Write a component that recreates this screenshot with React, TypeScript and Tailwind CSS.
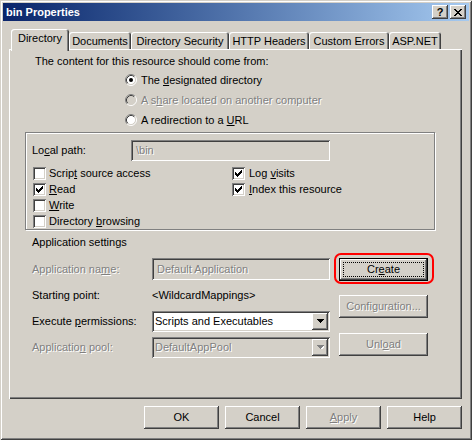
import React from "react";

const raised =
  "shadow-[inset_-1px_-1px_#404040,inset_1px_1px_#ffffff,inset_-2px_-2px_#808080]";
const sunken =
  "shadow-[inset_1px_1px_#808080,inset_-1px_-1px_#ffffff,inset_2px_2px_#404040,inset_-2px_-2px_#d4d0c8]";
const dis = "text-[#808080] [text-shadow:1px_1px_0_#ffffff]";

function Check({ checked }: { checked?: boolean }) {
  return (
    <span className={`w-[13px] h-[13px] bg-white ${sunken} flex items-center justify-center shrink-0`}>
      {checked && (
        <svg width="7" height="7" viewBox="0 0 7 7" shapeRendering="crispEdges">
          <path
            d="M0 2h1v3H0z M1 3h1v3H1z M2 4h1v3H2z M3 3h1v3H3z M4 2h1v3H4z M5 1h1v3H5z M6 0h1v3H6z"
            fill="#000"
          />
        </svg>
      )}
    </span>
  );
}

function Radio({ checked, disabled }: { checked?: boolean; disabled?: boolean }) {
  return (
    <svg width="12" height="12" viewBox="0 0 12 12" className="shrink-0">
      <circle cx="6" cy="6" r="4.5" fill={disabled ? "#d4d0c8" : "#ffffff"} />
      <path d="M2.11 9.89 A5.5 5.5 0 0 1 9.89 2.11" stroke="#808080" fill="none" strokeWidth="1" />
      <path d="M2.82 9.18 A4.5 4.5 0 0 1 9.18 2.82" stroke="#404040" fill="none" strokeWidth="1" />
      <path d="M9.89 2.11 A5.5 5.5 0 0 1 2.11 9.89" stroke="#ffffff" fill="none" strokeWidth="1" />
      <path d="M9.18 2.82 A4.5 4.5 0 0 1 2.82 9.18" stroke="#d4d0c8" fill="none" strokeWidth="1" />
      {checked && <circle cx="6" cy="6" r="2" fill="#000" />}
    </svg>
  );
}

function Arrow({ disabled }: { disabled?: boolean }) {
  return (
    <span className={`w-[16px] h-[17px] m-[2px] bg-[#d4d0c8] ${raised} flex items-center justify-center shrink-0`}>
      <svg width="7" height="4" viewBox="0 0 7 4" shapeRendering="crispEdges">
        {disabled && <path d="M1 1h7v1h-1v1h-1v1h-1v1h-1v-1h-1v-1h-1v-1h-1z" fill="#ffffff" />}
        <path d="M0 0h7v1h-1v1h-1v1h-1v1h-1v-1h-1v-1h-1v-1h-1z" fill={disabled ? "#808080" : "#000"} />
      </svg>
    </span>
  );
}

function Btn({
  children,
  className = "",
}: {
  children: React.ReactNode;
  className?: string;
}) {
  return (
    <div className={`h-[23px] bg-[#d4d0c8] ${raised} flex items-center justify-center ${className}`}>
      {children}
    </div>
  );
}

export default function App() {
  return (
    <div
      className={`w-[472px] h-[440px] bg-[#d4d0c8] p-[3px] flex flex-col font-['Liberation_Sans',Arial,sans-serif] text-[11px] leading-none text-black shadow-[inset_1px_1px_#d4d0c8,inset_-1px_-1px_#404040,inset_2px_2px_#ffffff,inset_-2px_-2px_#808080]`}
    >
      {/* Title bar */}
      <div className="h-[18px] flex items-center bg-linear-to-r from-[#0a246a] to-[#a6caf0] pl-[3px] pr-[3px]">
        <span className="font-bold text-white text-[11px] flex-1">bin Properties</span>
        <div className="flex gap-[2px]">
          <div className={`w-[16px] h-[14px] bg-[#d4d0c8] ${raised} flex items-center justify-center font-bold text-[11px] pt-px`}>
            ?
          </div>
          <div className={`w-[16px] h-[14px] bg-[#d4d0c8] ${raised} flex items-center justify-center`}>
            <svg width="8" height="7" viewBox="0 0 8 7" shapeRendering="crispEdges">
              <path
                d="M0 0h2v1h1v1h2v-1h1v-1h2v1h-1v1h-1v1h-1v1h1v1h1v1h1v1h-2v-1h-1v-1h-2v1h-1v1h-2v-1h1v-1h1v-1h1v-1h-1v-1h-1v-1h-1z"
                fill="#000"
              />
            </svg>
          </div>
        </div>
      </div>

      {/* Tabs */}
      <div className="ml-[6px] mt-[8px] flex flex-col">
        <div className="h-[20px] flex items-end pl-[2px]">
          <div className="relative z-10 w-[58px] h-[22px] -mb-[2px] bg-[#d4d0c8] rounded-t-[3px] shadow-[inset_1px_1px_#ffffff,inset_-1px_0_#404040,inset_-2px_0_#808080] flex items-center justify-center pb-[3px]">
            Directory
          </div>
          {[
            ["Documents", "w-[62px]"],
            ["Directory Security", "w-[98px]"],
            ["HTTP Headers", "w-[80px]"],
            ["Custom Errors", "w-[80px]"],
            ["ASP.NET", "w-[52px]"],
          ].map(([t, w]) => (
            <div
              key={t}
              className={`${w} h-[17px] bg-[#d4d0c8] rounded-t-[3px] shadow-[inset_1px_1px_#ffffff,inset_-1px_0_#404040,inset_-2px_0_#808080] flex items-center justify-center pt-[2px]`}
            >
              {t}
            </div>
          ))}
        </div>

        {/* Panel */}
        <div className="w-[453px] h-[350px] bg-[#d4d0c8] shadow-[inset_1px_1px_#ffffff,inset_-1px_-1px_#404040,inset_-2px_-2px_#808080] flex flex-col pt-[5px]">
          <div className="h-[14px] pl-[26px] flex items-center">
            The content for this resource should come from:
          </div>
          <div className="mt-[2px] flex flex-col pl-[116px]">
            <div className="h-[20px] flex items-center gap-[4px]">
              <Radio checked />
              <span>
                The <u>d</u>esignated directory
              </span>
            </div>
            <div className="h-[20px] flex items-center gap-[4px]">
              <Radio disabled />
              <span className={dis}>
                A s<u>h</u>are located on another computer
              </span>
            </div>
            <div className="h-[20px] flex items-center gap-[4px]">
              <Radio />
              <span>
                A redirection to a <u>U</u>RL
              </span>
            </div>
          </div>

          {/* Group box */}
          <div className="mt-[2px] ml-[16px] w-[410px] h-[98px] border border-[#808080] shadow-[inset_1px_1px_#ffffff,1px_1px_#ffffff] pt-[7px] pl-[6px] flex flex-col">
            <div className="h-[21px] flex items-center">
              <span className="w-[99px]">
                Lo<u>c</u>al path:
              </span>
              <div className={`w-[199px] h-[21px] ${sunken} bg-[#d4d0c8] flex items-center px-[5px]`}>
                <span className={dis}>\bin</span>
              </div>
            </div>
            <div className="mt-[4px] flex pl-px">
              <div className="w-[199px] flex flex-col">
                <div className="h-[16px] flex items-center gap-[3px]">
                  <Check />
                  <span>
                    Scrip<u>t</u> source access
                  </span>
                </div>
                <div className="h-[16px] flex items-center gap-[3px]">
                  <Check checked />
                  <span>
                    <u>R</u>ead
                  </span>
                </div>
                <div className="h-[16px] flex items-center gap-[3px]">
                  <Check />
                  <span>
                    <u>W</u>rite
                  </span>
                </div>
                <div className="h-[16px] flex items-center gap-[3px]">
                  <Check />
                  <span>
                    Directory <u>b</u>rowsing
                  </span>
                </div>
              </div>
              <div className="flex flex-col">
                <div className="h-[16px] flex items-center gap-[4px]">
                  <Check checked />
                  <span>
                    Log <u>v</u>isits
                  </span>
                </div>
                <div className="h-[16px] flex items-center gap-[4px]">
                  <Check checked />
                  <span>
                    <u>I</u>ndex this resource
                  </span>
                </div>
              </div>
            </div>
          </div>

          <div className="mt-[5px] h-[14px] pl-[23px] flex items-center">Application settings</div>

          <div className="mt-[7px] pl-[23px] flex">
            <div className="w-[298px] flex flex-col">
              <div className="h-[26px] flex items-center">
                <span className={`w-[120px] ${dis}`}>
                  Application na<u>m</u>e:
                </span>
                <div className={`w-[178px] h-[22px] ${sunken} bg-[#d4d0c8] flex items-center px-[5px]`}>
                  <span className={dis}>Default Application</span>
                </div>
              </div>
              <div className="h-[26px] flex items-center">
                <span className="w-[120px]">Starting point:</span>
                <span>&lt;WildcardMappings&gt;</span>
              </div>
              <div className="h-[26px] flex items-center">
                <span className="w-[120px]">
                  Execute <u>p</u>ermissions:
                </span>
                <div className={`w-[178px] h-[21px] ${sunken} bg-white flex items-center`}>
                  <span className="flex-1 pl-[3px]">Scripts and Executables</span>
                  <Arrow />
                </div>
              </div>
              <div className="h-[26px] flex items-center">
                <span className={`w-[120px] ${dis}`}>
                  Applicatio<u>n</u> pool:
                </span>
                <div className={`w-[178px] h-[21px] ${sunken} bg-[#d4d0c8] flex items-center`}>
                  <span className={`flex-1 pl-[3px] ${dis}`}>DefaultAppPool</span>
                  <Arrow disabled />
                </div>
              </div>
            </div>

            <div className="ml-[9px] w-[89px] flex flex-col">
              <div className="relative mt-[2px]">
                <div className="h-[23px] border border-black bg-[#d4d0c8]">
                  <div className={`relative h-full ${raised} flex items-center justify-center`}>
                    <span>
                      Cr<u>e</u>ate
                    </span>
                    <div className="absolute inset-[3px] border border-dotted border-black" />
                  </div>
                </div>
                <div className="absolute left-[-5px] right-[-6px] top-[-5px] bottom-[-3px] border-2 border-[#ff0000] rounded-[7px]" />
              </div>
              <Btn className="mt-[14px]">
                <span className={dis}>
                  Confi<u>g</u>uration...
                </span>
              </Btn>
              <Btn className="mt-[15px]">
                <span className={dis}>
                  Unl<u>o</u>ad
                </span>
              </Btn>
            </div>
          </div>
        </div>
      </div>

      {/* Bottom buttons */}
      <div className="mt-[7px] flex justify-end gap-[6px] pr-[7px]">
        <Btn className="w-[75px]">OK</Btn>
        <Btn className="w-[75px]">Cancel</Btn>
        <Btn className="w-[75px]">
          <span className={dis}>
            <u>A</u>pply
          </span>
        </Btn>
        <Btn className="w-[75px]">Help</Btn>
      </div>
    </div>
  );
}
